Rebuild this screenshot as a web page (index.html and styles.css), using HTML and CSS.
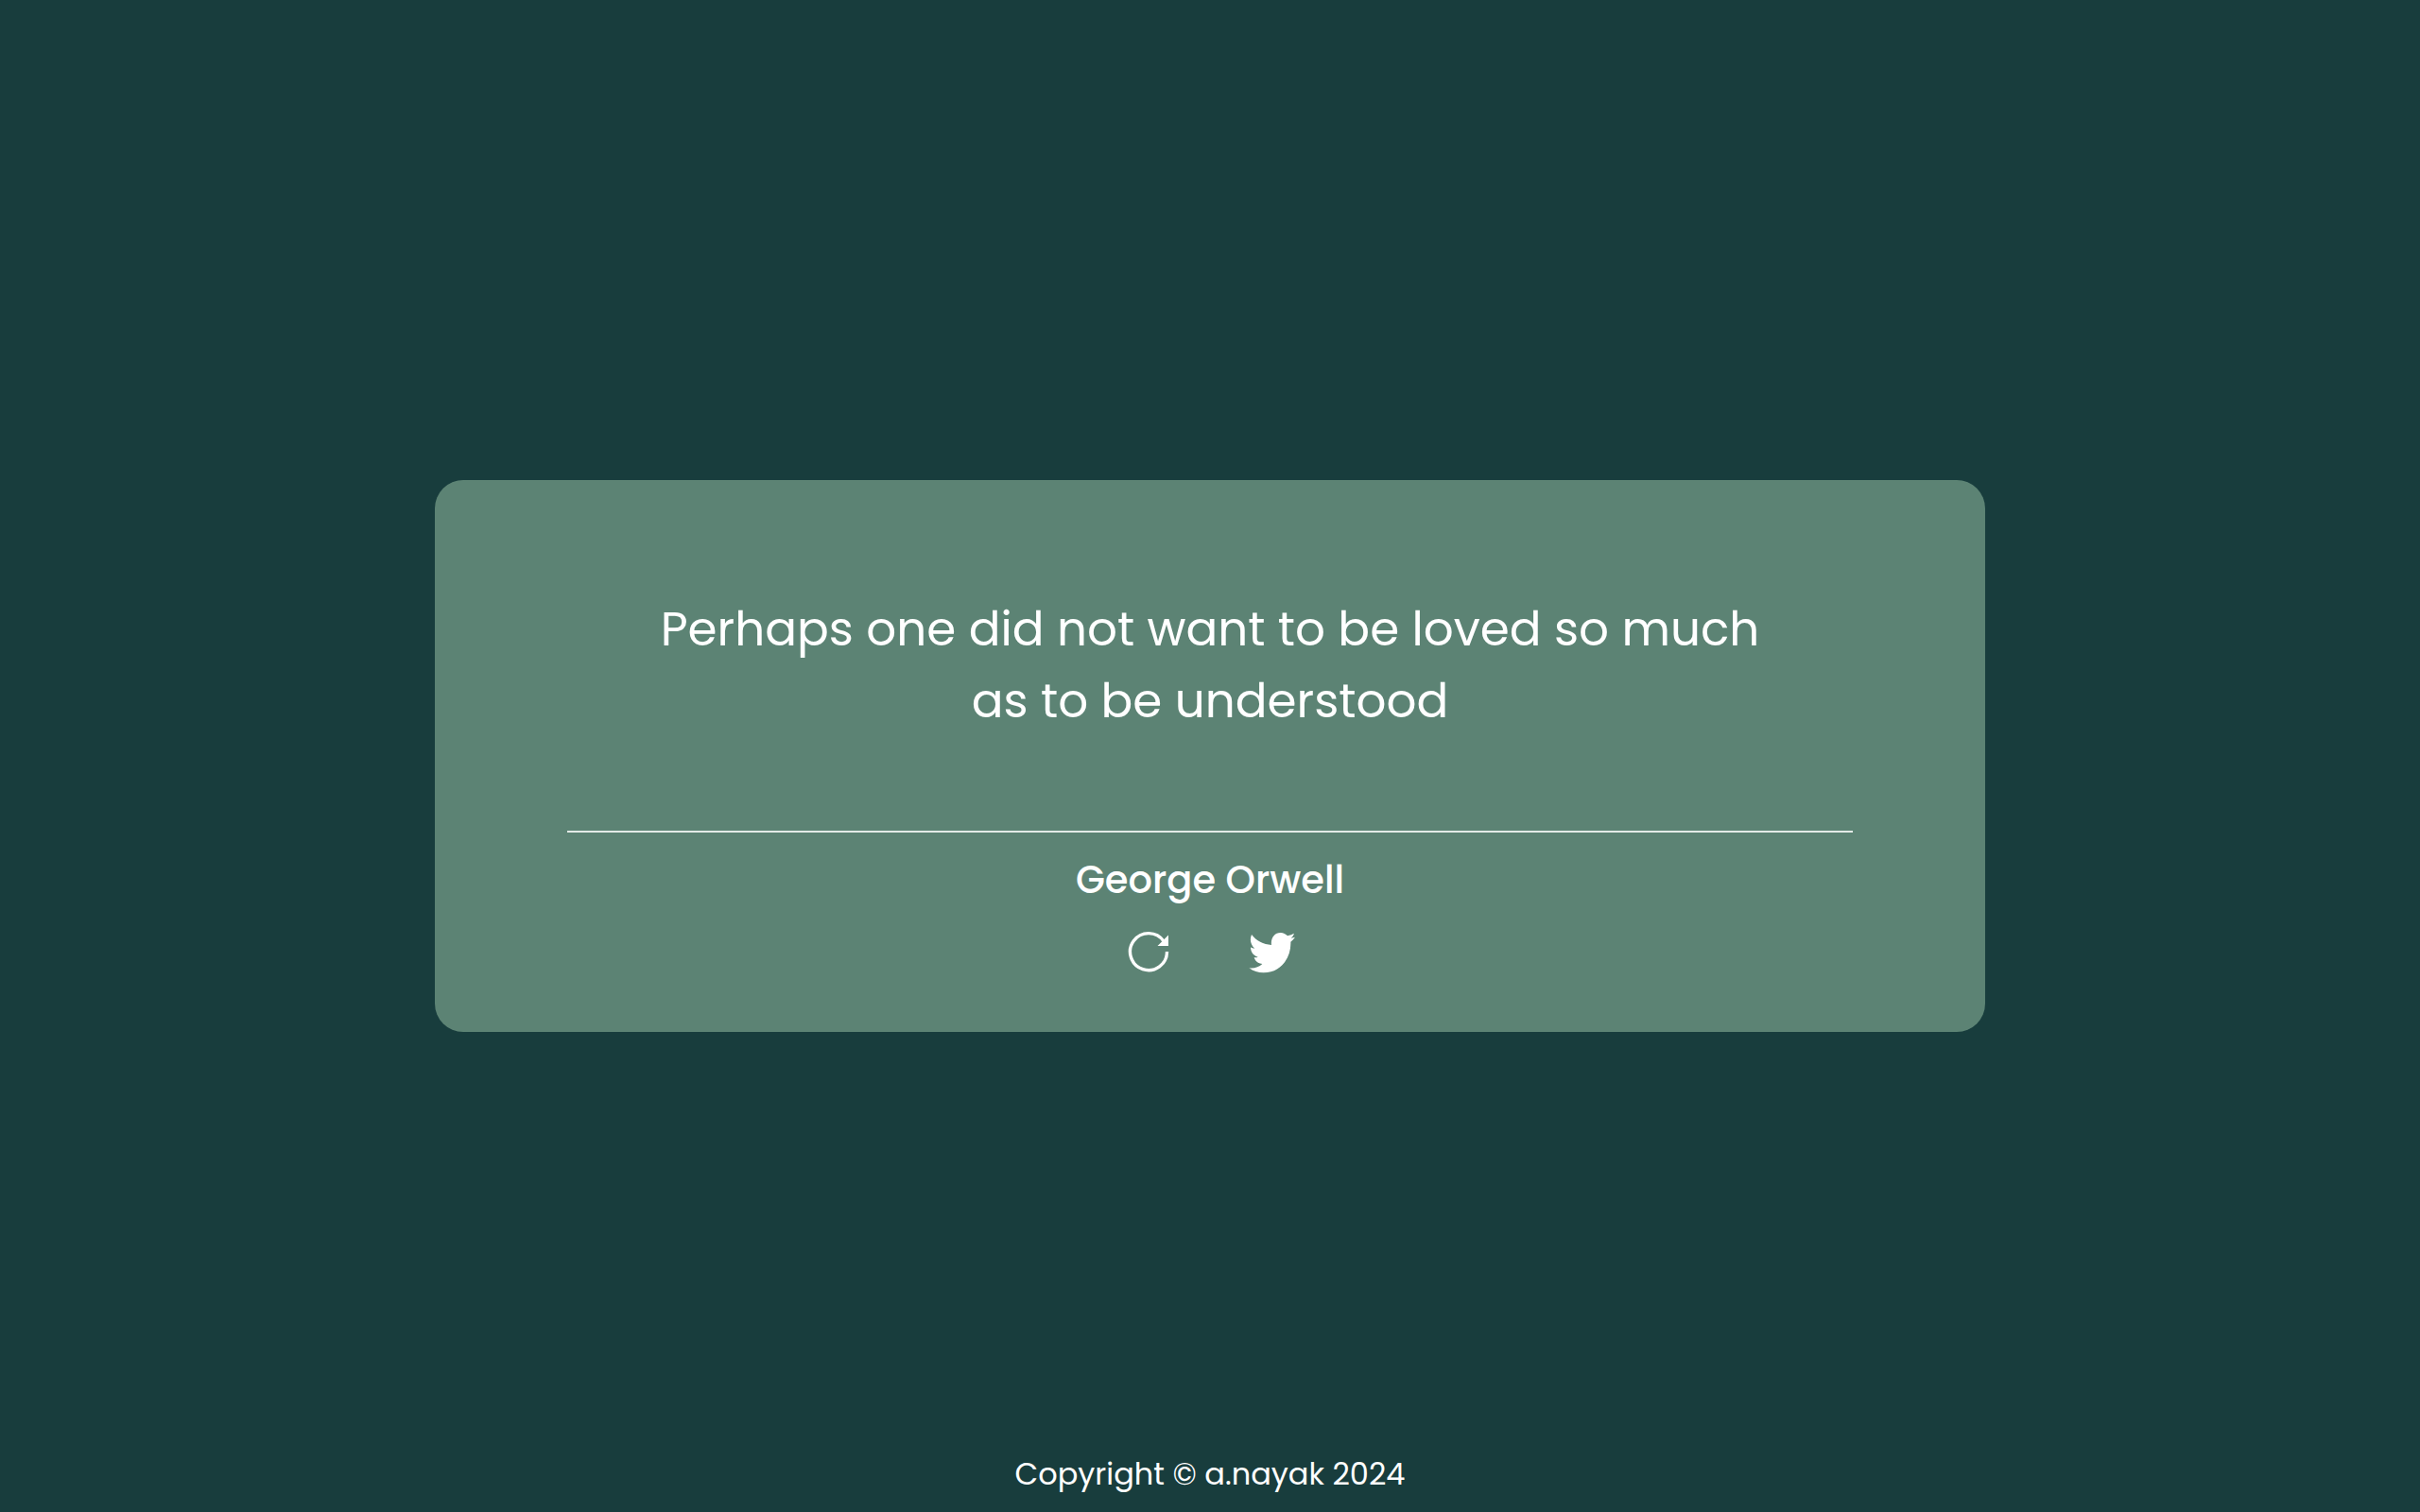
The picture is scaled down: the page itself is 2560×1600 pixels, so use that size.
FILE: index.html
```html
<!DOCTYPE html>
<html lang="en">
<head>
  <meta charset="utf-8">
  <meta name="viewport" content="width=device-width, initial-scale=1">
  <title>Quotes</title>
  <link rel="stylesheet" href="styles.css">
</head>
<body>
  <main class="card">
    <blockquote class="quote">Perhaps one did not want to be loved so much as to be understood</blockquote>
    <hr class="rule">
    <p class="author">George Orwell</p>
    <div class="actions">
      <button class="action" type="button" aria-label="New quote">
        <svg class="icon" viewBox="0 0 50 50" aria-hidden="true">
          <path d="M44.500 25A19.500 19.500 0 1 1 41 14" fill="none" stroke="currentColor" stroke-width="3.400"/>
          <path d="M46 7.500V19H34.500Z" fill="currentColor"/>
        </svg>
      </button>
      <button class="action" type="button" aria-label="Share on Twitter">
        <svg class="icon" viewBox="0 0 150 150" aria-hidden="true">
          <path d="M12 21C27 41 50 52 75 54C72 33 84 15 104 15C113 15 120 19 126 25C134 23 141 20 147 17C145 24 141 28 137 32C142 31 146 30 150 29C146 35 141 40 136 44C138 91 108 142 50 142C33 142 17 137 4 127C19 130 35 124 46 114C32 113 23 105 20 93C24 94 28 94 32 92C17 88 9 76 9 61C13 64 17 65 22 65C9 54 5 37 12 21Z" fill="currentColor"/>
        </svg>
      </button>
    </div>
  </main>
  <footer class="footer">Copyright © a.nayak 2024</footer>
</body>
</html>
```

FILE: styles.css
```css
* {
  box-sizing: border-box;
  margin: 0;
}

body {
  display: grid;
  grid-template-rows: 1fr auto 1fr;
  justify-items: center;
  min-height: 100vh;
  background: #183d3d;
  color: #fff;
  font-family: Poppins, Inter, sans-serif;
  text-align: center;
}

.card {
  grid-row: 2;
  width: 90%;
  max-width: 1640px;
  padding: 120px 140px 60px;
  border-radius: 30px;
  background: #5c8374;
}

.quote {
  padding: 0 80px;
  font-size: 50px;
  line-height: 76px;
}

.rule {
  height: 2px;
  margin: 99px 0 20px;
  border: 0;
  background: #e3ebe7;
}

.author {
  font-size: 40px;
  font-weight: 500;
  line-height: 60px;
}

.actions {
  display: flex;
  justify-content: center;
  gap: 80px;
  margin-top: 21px;
}

.action {
  width: 50px;
  height: 50px;
  padding: 0;
  border: 0;
  background: none;
  color: inherit;
  cursor: pointer;
}

.icon {
  display: block;
  width: 100%;
  height: 100%;
}

.footer {
  grid-row: 3;
  align-self: end;
  padding-bottom: 16px;
  font-size: 32px;
  line-height: 48px;
}
```
